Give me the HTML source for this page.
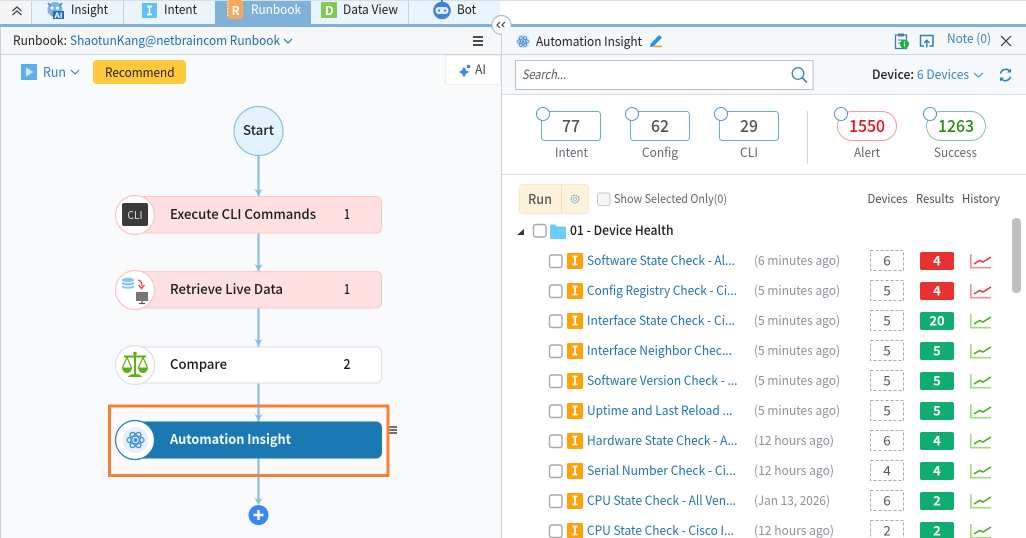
<!DOCTYPE html>
<html><head><meta charset="utf-8">
<style>
html,body{margin:0;padding:0;background:#fff;width:1026px;height:538px;overflow:hidden}
svg{display:block}
text{font-family:"Noto Sans CJK SC","Liberation Sans",sans-serif;font-size:12.8px;fill:#222;}
.n{fill:#2474ae}
.t{fill:#8d929b}
.d{fill:#555;text-anchor:middle;font-size:13.5px}
.b{fill:#fff;text-anchor:middle;font-weight:700;font-size:13px}
.h{fill:#4a4f55;font-size:12px}
.f{font-size:13.5px;font-weight:500;fill:#1c1c1c}
.l{fill:#626a73;font-size:12.8px}
.s{font-size:17px;font-weight:500;text-anchor:middle;fill:#555}
.ck{fill:#fff;stroke:#a8a8a8;stroke-width:1.4}
.dash{fill:#fff;stroke:#aaa;stroke-width:1;stroke-dasharray:3 2}
</style></head><body>
<svg width="1026" height="538" viewBox="0 0 1026 538" xmlns="http://www.w3.org/2000/svg">
<defs>
<g id="rowbase">
<rect class="ck" x="549.500" y="-6" width="12.500" height="12.500" rx="2"/>
<rect x="567" y="-8" width="16" height="16" rx="1.500" fill="#ffa208"/>
<path d="M572.500-4.500h5M572.500 3.500h5M575-4.500v8" stroke="#fff" stroke-width="1.800" fill="none"/>
<rect class="dash" x="870.500" y="-10.500" width="33" height="20"/>
</g>
<g id="chR"><path d="M970.800-7V6.700H991" fill="none" stroke="#f88f8f" stroke-width="1.600"/><path d="M974 3l5.500-3.500 3.500 1.500 8-5" fill="none" stroke="#e8343a" stroke-width="1.600"/></g>
<g id="chG"><path d="M970.800-7V6.700H991" fill="none" stroke="#9ddc78" stroke-width="1.600"/><path d="M974 3l5.500-3.500 3.500 1.500 8-5" fill="none" stroke="#4ea81a" stroke-width="1.600"/></g>
<g id="atom" fill="none" stroke="#3d8fd8" stroke-width="1.300">
<ellipse rx="8.500" ry="3.800"/><ellipse rx="8.500" ry="3.800" transform="rotate(60)"/><ellipse rx="8.500" ry="3.800" transform="rotate(120)"/><circle r="2" fill="#3d8fd8" stroke="none"/>
</g>
</defs>

<!-- top area -->
<rect width="1026" height="538" fill="#fff"/>
<rect x="0" y="0" width="1026" height="1" fill="#d3dfeb"/>
<rect x="0" y="1" width="500" height="23" fill="#ebf3fb"/>
<rect x="0" y="1" width="31" height="23" fill="#f5f5f5"/>
<rect x="31" y="1" width="1" height="23" fill="#c4d5e4"/>
<rect x="123" y="1" width="1" height="23" fill="#c4d5e4"/>
<rect x="408" y="1" width="1" height="23" fill="#c4d5e4"/>
<rect x="215" y="1" width="96" height="24" fill="#7fb1d9"/>
<rect x="0" y="24" width="1026" height="3" fill="#7fb1d9"/>

<path d="M12.500 11l4.500-4 4.500 4M12.500 15l4.500-4 4.500 4" fill="none" stroke="#444" stroke-width="1.300"/>
<!-- Insight icon -->
<circle cx="55" cy="9.500" r="7.500" fill="#79b3e3"/>
<circle cx="52" cy="8" r="1.500" fill="#fff"/><circle cx="57.500" cy="8" r="1.500" fill="#fff"/>
<path d="M48 3l2.500 3M62 3l-2.500 3" stroke="#3e85c4" stroke-width="1.500"/>
<rect x="53" y="11" width="11" height="8" fill="#2070b0"/>
<text x="54.500" y="18" style="font-size:7.500px;font-weight:700;fill:#fff" textLength="8" lengthAdjust="spacingAndGlyphs">AI</text>
<text x="71" y="14" textLength="37" lengthAdjust="spacingAndGlyphs">Insight</text>
<!-- Intent icon -->
<rect x="142" y="3" width="15" height="15" fill="#5dc3f5"/>
<path d="M147 6.500h5M147 14.500h5M149.500 6.500v8" stroke="#fff" stroke-width="1.700" fill="none"/>
<text x="164" y="14" textLength="33" lengthAdjust="spacingAndGlyphs">Intent</text>
<!-- Runbook icon -->
<rect x="227" y="0" width="16" height="19" rx="3" fill="#f6a85b"/>
<path d="M227 3h1.500M227 6h1.500M227 9h1.500M227 12h1.500M227 15h1.500" stroke="#fff" stroke-width="1"/>
<text x="231.500" y="15" style="font-size:12px;font-weight:700;fill:#fff">R</text>
<text x="251" y="14" textLength="50" lengthAdjust="spacingAndGlyphs" style="fill:#fff">Runbook</text>
<!-- Data View icon -->
<rect x="321" y="2" width="16" height="16" fill="#7fcb4e"/>
<text x="325" y="15" style="font-size:12px;font-weight:700;fill:#fff">D</text>
<text x="343" y="14" textLength="55" lengthAdjust="spacingAndGlyphs">Data View</text>
<!-- Bot icon -->
<circle cx="442" cy="10.500" r="8.800" fill="#3f86cc"/>
<rect x="441" y="0" width="2" height="3" fill="#3f86cc"/>
<rect x="435.500" y="7" width="13" height="7" rx="3.200" fill="#dde9f5"/>
<circle cx="439" cy="10.500" r="1.100" fill="#3f86cc"/><circle cx="445" cy="10.500" r="1.100" fill="#3f86cc"/>
<text x="457" y="14" textLength="19" lengthAdjust="spacingAndGlyphs">Bot</text>

<!-- left panel -->
<rect x="0" y="27" width="501" height="27" fill="#f5f7f9"/>
<rect x="0" y="54" width="501" height="1" fill="#ccd6e0"/>
<rect x="0" y="55" width="501" height="483" fill="#f9fafc"/>
<rect x="0" y="27" width="1" height="511" fill="#c9d3dd"/>
<rect x="501" y="27" width="1" height="511" fill="#c9d3dd"/>
<text x="13" y="45" textLength="54" lengthAdjust="spacingAndGlyphs">Runbook:</text>
<text x="70" y="45" textLength="210" lengthAdjust="spacingAndGlyphs" style="fill:#1c70ab">ShaotunKang@netbraincom Runbook</text>
<path d="M284 39l4 4 4-4" fill="none" stroke="#1c70ab" stroke-width="1.100"/>
<path d="M473 37h10M473 41h10M473 45h10" stroke="#333" stroke-width="1.700"/>

<rect x="21" y="64" width="16" height="16" fill="#5cb0e8"/>
<path d="M26 67.500v9l7.500-4.500z" fill="#cfe9fa"/>
<text x="43" y="77" textLength="23" lengthAdjust="spacingAndGlyphs" style="fill:#2f7fc1;font-size:13.500px">Run</text>
<path d="M71 70l4 4 4-4" fill="none" stroke="#2f7fc1" stroke-width="1.100"/>
<rect x="93" y="60" width="93" height="24" rx="4" fill="#ffc83d"/>
<text x="105" y="77" textLength="69.500" lengthAdjust="spacingAndGlyphs" style="fill:#2a2410">Recommend</text>

<rect x="445" y="55" width="56" height="30" fill="#e6e9ed" opacity=".7"/>
<rect x="446" y="56" width="54" height="28" fill="#fff"/>
<path d="M464 66.500l2 4 3.500 1.500-3.500 1.500-2 4-2-4-3.500-1.500 3.500-1.500z" fill="#3a86e0"/>
<circle cx="468.500" cy="66.500" r="1.800" fill="#3a86e0"/>
<text x="475" y="74" textLength="11" lengthAdjust="spacingAndGlyphs" style="fill:#444">AI</text>

<circle cx="501.500" cy="25" r="9.500" fill="#fff" stroke="#9cc2e0" stroke-width="1.200"/>
<path d="M500 22l-3 3 3 3M505 22l-3 3 3 3" fill="none" stroke="#444" stroke-width="1.200"/>

<!-- flow -->
<path d="M258.500 156v284M258.500 458v42" stroke="#8abde6" stroke-width="2.200"/>
<g fill="#8abde6">
<path d="M254.500 189l4 7 4-7-4 2z"/><path d="M254.500 264l4 7 4-7-4 2z"/><path d="M254.500 339l4 7 4-7-4 2z"/><path d="M254.500 414l4 7 4-7-4 2z"/><path d="M254.500 498l4 7 4-7-4 2z"/>
</g>
<circle cx="258.500" cy="131" r="24.500" fill="#e3f3fe" stroke="#8fbfe0" stroke-width="1.200"/>
<text x="243" y="135" textLength="31" lengthAdjust="spacingAndGlyphs" style="font-size:13.500px;font-weight:500">Start</text>

<rect x="125" y="196.500" width="256.500" height="36.500" rx="5" fill="#ffe0e0" stroke="#fcc8c8"/>
<circle cx="135" cy="215" r="19.500" fill="#fff" stroke="#fcc4c4" stroke-width="1.200"/>
<rect x="122" y="203" width="26" height="23" rx="2" fill="#3a3a3a"/>
<text x="127.500" y="219" textLength="15" lengthAdjust="spacingAndGlyphs" style="font-size:11px;fill:#ddd">CLI</text>
<text class="f" x="170" y="219" textLength="146" lengthAdjust="spacingAndGlyphs">Execute CLI Commands</text>
<text class="f" x="344" y="219" textLength="6" lengthAdjust="spacingAndGlyphs">1</text>

<rect x="125" y="271.500" width="256.500" height="36.500" rx="5" fill="#ffe0e0" stroke="#fcc8c8"/>
<circle cx="135" cy="290" r="19.500" fill="#fff" stroke="#fcc4c4" stroke-width="1.200"/>
<ellipse cx="128" cy="280" rx="6.200" ry="2.300" fill="#8cc4f0"/><path d="M121.800 282q6.200 2.500 12.400 0v2.200q-6.200 2.500-12.400 0zM121.800 285.500q6.200 2.500 12.400 0v2q-6.200 2.500-12.400 0z" fill="#8cc4f0"/>
<path d="M138 280q4.500 1 3.500 6M138.500 285l3 3.500 3-3.500" fill="none" stroke="#ee4444" stroke-width="1.400"/>
<rect x="136" y="292" width="12" height="9" fill="#777"/><path d="M142 301v2M139 303.500h6" stroke="#555" stroke-width="1.200"/>
<text class="f" x="170" y="294" textLength="113" lengthAdjust="spacingAndGlyphs">Retrieve Live Data</text>
<text class="f" x="344" y="294" textLength="6" lengthAdjust="spacingAndGlyphs">1</text>

<rect x="125" y="347" width="256.500" height="36" rx="5" fill="#fff" stroke="#dfe4ea" stroke-width="1.200"/>
<circle cx="135" cy="365" r="19.500" fill="#fff" stroke="#dbe0e6" stroke-width="1.200"/>
<g fill="#5fae12">
<rect x="134" y="353" width="2" height="21"/><rect x="124" y="355.500" width="22" height="2"/><circle cx="135" cy="353.500" r="1.800"/>
<path d="M122 367.500h10a5 5.500 0 0 1-10 0zM138 367.500h10a5 5.500 0 0 1-10 0z"/>
<path d="M128 377q1-3 7-3t7 3z"/>
</g>
<path d="M122.500 367.500l4.500-10 4.500 10M138.500 367.500l4.500-10 4.500 10" fill="none" stroke="#5fae12" stroke-width="1.200"/>
<text class="f" x="170" y="369" textLength="57" lengthAdjust="spacingAndGlyphs">Compare</text>
<text class="f" x="343.500" y="369" textLength="7" lengthAdjust="spacingAndGlyphs">2</text>

<rect x="125" y="421.500" width="257" height="37" rx="6" fill="#1a79b2"/>
<circle cx="135" cy="440" r="19.500" fill="#fff" stroke="#2878b8" stroke-width="1.200"/>
<circle cx="135.500" cy="440" r="13" fill="#e8f0fa"/>
<use href="#atom" x="135.500" y="440"/>
<text x="170" y="444" textLength="121" lengthAdjust="spacingAndGlyphs" style="fill:#f2f8fc;font-size:13.500px;font-weight:700">Automation Insight</text>
<path d="M389 427h8M389 430h8M389 433h8" stroke="#444" stroke-width="1.400"/>
<rect x="109.500" y="406" width="278.500" height="69.500" fill="none" stroke="#f58233" stroke-width="3"/>
<circle cx="258.500" cy="515" r="10" fill="#3b86f7"/>
<path d="M253.500 515h10M258.500 510v10" stroke="#fff" stroke-width="2.400"/>

<!-- right header -->
<rect x="502" y="27" width="524" height="27" fill="#f5f8fb"/>
<rect x="502" y="54" width="524" height="1" fill="#ccd6e0"/>
<rect x="502" y="55" width="524" height="39" fill="#f6f9fc"/>
<rect x="502" y="94" width="524" height="1" fill="#d9dee3"/>
<circle cx="523" cy="41.500" r="7" fill="#d6e6f5"/>
<use href="#atom" transform="translate(523 41.500) scale(.65)"/>
<text x="536" y="46" textLength="106" lengthAdjust="spacingAndGlyphs" style="font-size:13px">Automation Insight</text>
<path d="M650.500 44l8.500-9 3 2.500-8.500 9-3.500 .5z" fill="#2e8fe6"/>
<rect x="654" y="45.500" width="8" height="1.700" fill="#f5a623"/>

<rect x="895.500" y="35" width="11" height="13.500" fill="none" stroke="#3f7fae" stroke-width="1.300"/>
<rect x="898" y="33.500" width="6" height="3" fill="#3f7fae"/>
<path d="M898 40h6M898 43h3" stroke="#3f7fae"/>
<circle cx="904.500" cy="44" r="4.500" fill="#1fae44"/>
<path d="M904.500 41.500v1M904.500 43.500v3" stroke="#fff" stroke-width="1.200"/>
<path d="M924 46h-3.500v-10.500h12.500v10.500h-3.500" fill="none" stroke="#2f7fb8" stroke-width="1.500"/>
<path d="M926.800 47.500v-7M924.300 43l2.500-2.800 2.500 2.800" fill="none" stroke="#2f7fb8" stroke-width="1.400"/>
<text x="947" y="43" textLength="44" lengthAdjust="spacingAndGlyphs" style="fill:#3a83bd">Note (0)</text>
<path d="M1001 36l10 10M1011 36l-10 10" stroke="#333" stroke-width="1.200"/>

<rect x="515.500" y="60.500" width="297.500" height="29" fill="#fff" stroke="#b9c0c6"/>
<text x="522" y="79" textLength="44" lengthAdjust="spacingAndGlyphs" style="font-style:italic;fill:#555">Search...</text>
<circle cx="798" cy="73.500" r="5.800" fill="none" stroke="#3a86b8" stroke-width="1.300"/>
<path d="M802.500 78l4.500 4.500" stroke="#3a86b8" stroke-width="1.600"/>
<text x="872" y="79" textLength="42" lengthAdjust="spacingAndGlyphs" style="font-weight:500;fill:#222">Device:</text>
<text x="917" y="79" textLength="52" lengthAdjust="spacingAndGlyphs" style="fill:#3a83bd">6 Devices</text>
<path d="M974 73l4.500 4 4.500-4" fill="none" stroke="#3a83bd" stroke-width="1"/>
<path d="M1000.500 73.500a5.500 5.500 0 0 1 9-2.800M1010.500 76.500a5.500 5.500 0 0 1-9 2.800" fill="none" stroke="#2f7fb8" stroke-width="1.600"/>
<path d="M1011 68.500v4h-4zM1000 81.500v-4h4z" fill="#2f7fb8"/>

<!-- stats -->
<g fill="#fff" stroke="#66abf0" stroke-width="1">
<rect x="541.500" y="111.500" width="59" height="29" rx="3"/>
<rect x="630.500" y="111.500" width="59" height="29" rx="3"/>
<rect x="719.500" y="111.500" width="59" height="29" rx="3"/>
</g>
<rect x="837.500" y="111.500" width="59" height="29" rx="14.500" fill="#fff" stroke="#f49a9a"/>
<rect x="926.500" y="111.500" width="59" height="29" rx="14.500" fill="#fff" stroke="#7fc3a6"/>
<g fill="#fff" stroke="#5c93e8" stroke-width="1.100">
<circle cx="543" cy="114" r="6.500"/><circle cx="632" cy="114" r="6.500"/><circle cx="721" cy="114" r="6.500"/><circle cx="841" cy="114" r="6.500"/><circle cx="930" cy="114" r="6.500"/>
</g>
<text class="s" x="571" y="132" textLength="18" lengthAdjust="spacingAndGlyphs">77</text>
<text class="s" x="660" y="132" textLength="18" lengthAdjust="spacingAndGlyphs">62</text>
<text class="s" x="749" y="132" textLength="18" lengthAdjust="spacingAndGlyphs">29</text>
<text class="s" x="867" y="132" textLength="36" lengthAdjust="spacingAndGlyphs" style="fill:#e8101c">1550</text>
<text class="s" x="956" y="132" textLength="36" lengthAdjust="spacingAndGlyphs" style="fill:#2e8b10">1263</text>
<text class="l" x="555" y="157" textLength="33" lengthAdjust="spacingAndGlyphs">Intent</text>
<text class="l" x="642" y="157" textLength="36" lengthAdjust="spacingAndGlyphs">Config</text>
<text class="l" x="740" y="157" textLength="18" lengthAdjust="spacingAndGlyphs">CLI</text>
<text class="l" x="854" y="157" textLength="26" lengthAdjust="spacingAndGlyphs">Alert</text>
<text class="l" x="934" y="157" textLength="43" lengthAdjust="spacingAndGlyphs">Success</text>
<rect x="807" y="111" width="1" height="53" fill="#d5d8db"/>
<rect x="502" y="174" width="524" height="1" fill="#dcdcdc"/>

<!-- toolbar -->
<rect x="519.500" y="184.500" width="69" height="29" rx="3" fill="#fdf3da" stroke="#fbe9bd"/>
<rect x="561" y="185" width="1" height="28" fill="#f8dfa3"/>
<text x="528" y="204" textLength="24" lengthAdjust="spacingAndGlyphs" style="font-size:13.500px;font-weight:500;fill:#5a5a5a">Run</text>
<circle cx="575" cy="199" r="3.800" fill="none" stroke="#8ab0cc" stroke-width="1.300" stroke-dasharray="2 .6"/>
<circle cx="575" cy="199" r="1.500" fill="none" stroke="#8ab0cc" stroke-width=".8"/>
<rect x="597.500" y="193" width="12.500" height="12.500" rx="2" fill="#f5f5f5" stroke="#c8c8c8"/>
<text x="614" y="203" textLength="113" lengthAdjust="spacingAndGlyphs" style="fill:#666;font-size:12px">Show Selected Only(0)</text>
<text class="h" x="867.500" y="203" textLength="40" lengthAdjust="spacingAndGlyphs">Devices</text>
<text class="h" x="916" y="203" textLength="38" lengthAdjust="spacingAndGlyphs">Results</text>
<text class="h" x="962" y="203" textLength="38" lengthAdjust="spacingAndGlyphs">History</text>

<path d="M517 235l7-6v6z" fill="#333"/>
<rect class="ck" x="533.500" y="224.500" width="12.500" height="12.500" rx="2"/>
<path d="M550 226q0-1.500 1.500-1.500h4l1.500 2h8q1 0 1 1v10.500q0 1-1 1h-14q-1 0-1-1z" fill="#6ccdf8"/>
<text x="570" y="235" textLength="103.500" lengthAdjust="spacingAndGlyphs" style="font-weight:500;font-size:13px;fill:#1c1c1c">01 - Device Health</text>

<rect x="1012" y="218" width="9" height="75" rx="4" fill="#bfbfbf"/>

<!-- rows -->
<g transform="translate(0 261)"><use href="#rowbase"/><text class="n" x="587" y="4" textLength="148" lengthAdjust="spacingAndGlyphs">Software State Check - Al...</text><text class="t" x="754" y="4" textLength="86" lengthAdjust="spacingAndGlyphs">(6 minutes ago)</text><text class="d" x="887" y="4.500">6</text><rect x="920" y="-9" width="34" height="18" rx="2" fill="#e83232"/><text class="b" x="937" y="4.500">4</text><use href="#chR"/></g>
<g transform="translate(0 291)"><use href="#rowbase"/><text class="n" x="587" y="4" textLength="150" lengthAdjust="spacingAndGlyphs">Config Registry Check - Ci...</text><text class="t" x="754" y="4" textLength="86" lengthAdjust="spacingAndGlyphs">(5 minutes ago)</text><text class="d" x="887" y="4.500">5</text><rect x="920" y="-9" width="34" height="18" rx="2" fill="#e83232"/><text class="b" x="937" y="4.500">4</text><use href="#chR"/></g>
<g transform="translate(0 321)"><use href="#rowbase"/><text class="n" x="587" y="4" textLength="148" lengthAdjust="spacingAndGlyphs">Interface State Check - Ci...</text><text class="t" x="754" y="4" textLength="86" lengthAdjust="spacingAndGlyphs">(5 minutes ago)</text><text class="d" x="887" y="4.500">5</text><rect x="920" y="-9" width="34" height="18" rx="2" fill="#0fae70"/><text class="b" x="937" y="4.500">20</text><use href="#chG"/></g>
<g transform="translate(0 351)"><use href="#rowbase"/><text class="n" x="587" y="4" textLength="145" lengthAdjust="spacingAndGlyphs">Interface Neighbor Chec...</text><text class="t" x="754" y="4" textLength="86" lengthAdjust="spacingAndGlyphs">(5 minutes ago)</text><text class="d" x="887" y="4.500">5</text><rect x="920" y="-9" width="34" height="18" rx="2" fill="#0fae70"/><text class="b" x="937" y="4.500">5</text><use href="#chG"/></g>
<g transform="translate(0 381)"><use href="#rowbase"/><text class="n" x="587" y="4" textLength="150.500" lengthAdjust="spacingAndGlyphs">Software Version Check - ...</text><text class="t" x="754" y="4" textLength="86" lengthAdjust="spacingAndGlyphs">(5 minutes ago)</text><text class="d" x="887" y="4.500">5</text><rect x="920" y="-9" width="34" height="18" rx="2" fill="#0fae70"/><text class="b" x="937" y="4.500">5</text><use href="#chG"/></g>
<g transform="translate(0 411)"><use href="#rowbase"/><text class="n" x="587" y="4" textLength="145.500" lengthAdjust="spacingAndGlyphs">Uptime and Last Reload ...</text><text class="t" x="754" y="4" textLength="86" lengthAdjust="spacingAndGlyphs">(5 minutes ago)</text><text class="d" x="887" y="4.500">5</text><rect x="920" y="-9" width="34" height="18" rx="2" fill="#0fae70"/><text class="b" x="937" y="4.500">5</text><use href="#chG"/></g>
<g transform="translate(0 441)"><use href="#rowbase"/><text class="n" x="587" y="4" textLength="150.500" lengthAdjust="spacingAndGlyphs">Hardware State Check - A...</text><text class="t" x="754" y="4" textLength="80" lengthAdjust="spacingAndGlyphs">(12 hours ago)</text><text class="d" x="887" y="4.500">6</text><rect x="920" y="-9" width="34" height="18" rx="2" fill="#0fae70"/><text class="b" x="937" y="4.500">4</text><use href="#chG"/></g>
<g transform="translate(0 471)"><use href="#rowbase"/><text class="n" x="587" y="4" textLength="149" lengthAdjust="spacingAndGlyphs">Serial Number Check - Ci...</text><text class="t" x="754" y="4" textLength="80" lengthAdjust="spacingAndGlyphs">(12 hours ago)</text><text class="d" x="887" y="4.500">4</text><rect x="920" y="-9" width="34" height="18" rx="2" fill="#0fae70"/><text class="b" x="937" y="4.500">4</text><use href="#chG"/></g>
<g transform="translate(0 501)"><use href="#rowbase"/><text class="n" x="587" y="4" textLength="149" lengthAdjust="spacingAndGlyphs">CPU State Check - All Ven...</text><text class="t" x="754" y="4" textLength="76" lengthAdjust="spacingAndGlyphs">(Jan 13, 2026)</text><text class="d" x="887" y="4.500">6</text><rect x="920" y="-9" width="34" height="18" rx="2" fill="#0fae70"/><text class="b" x="937" y="4.500">2</text><use href="#chG"/></g>
<g transform="translate(0 531)"><use href="#rowbase"/><text class="n" x="587" y="4" textLength="147" lengthAdjust="spacingAndGlyphs">CPU State Check - Cisco I...</text><text class="t" x="754" y="4" textLength="80" lengthAdjust="spacingAndGlyphs">(12 hours ago)</text><text class="d" x="887" y="4.500">2</text><rect x="920" y="-9" width="34" height="18" rx="2" fill="#0fae70"/><text class="b" x="937" y="4.500">2</text><use href="#chG"/></g>
</svg>
</body></html>
